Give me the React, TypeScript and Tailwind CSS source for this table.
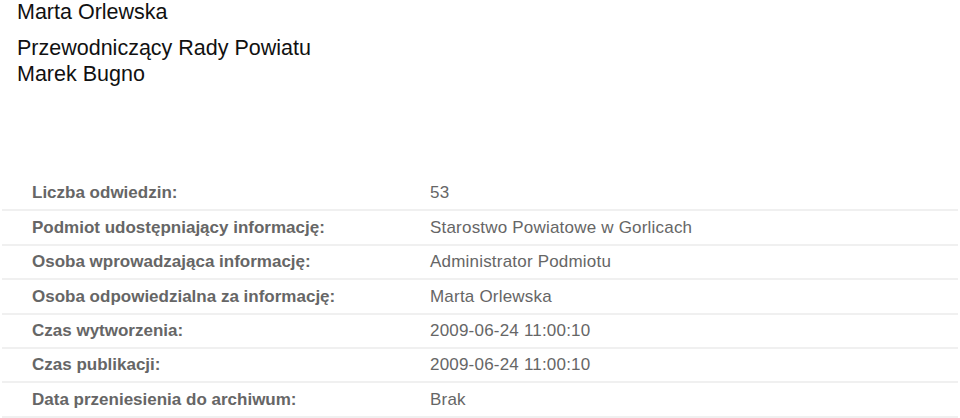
const rows: [string, string][] = [
  ["Liczba odwiedzin:", "53"],
  ["Podmiot udostępniający informację:", "Starostwo Powiatowe w Gorlicach"],
  ["Osoba wprowadzająca informację:", "Administrator Podmiotu"],
  ["Osoba odpowiedzialna za informację:", "Marta Orlewska"],
  ["Czas wytworzenia:", "2009-06-24 11:00:10"],
  ["Czas publikacji:", "2009-06-24 11:00:10"],
  ["Data przeniesienia do archiwum:", "Brak"],
]

export default function App() {
  return (
    <div className="w-[960px] h-[418px] overflow-hidden bg-white font-['Liberation_Sans',Arial,sans-serif]">
      <div className="pl-[17px] text-[21.5px] text-[#111]">
        <p className="leading-[24px]">Marta Orlewska</p>
        <div className="mt-[11px] leading-[26px]">
          <p>Przewodniczący Rady Powiatu</p>
          <p>Marek Bugno</p>
        </div>
      </div>

      <div className="mt-[90px] mx-[2px]">
        {rows.map(([label, value]) => (
          <div
            key={label}
            className="flex h-[34.4px] items-center border-b-2 border-[#f0f0f0] text-[17px] text-[#666]"
          >
            <div className="w-[428px] pl-[30px] font-bold">{label}</div>
            <div className="tracking-[0.2px]">{value}</div>
          </div>
        ))}
      </div>
    </div>
  )
}
